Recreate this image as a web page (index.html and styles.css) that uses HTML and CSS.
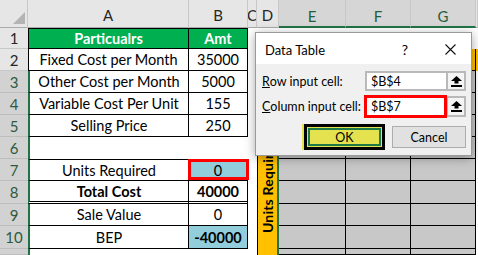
FILE: index.html
```html
<!DOCTYPE html>
<html>
<head>
<meta charset="utf-8">
<link rel="stylesheet" href="styles.css">
</head>
<body>
<div class="sheet">
  <!-- header row -->
  <div class="corner"><svg width="28" height="28" viewBox="0 0 28 28"><polygon points="25,12 25,24 13,24" fill="#b4b4b4"/></svg></div>
  <div class="ch">A</div>
  <div class="ch">B</div>
  <div class="ch">C</div>
  <div class="ch">D</div>
  <div class="ch sel">E</div>
  <div class="ch sel">F</div>
  <div class="ch sel">G</div>
  <div class="ch"></div>

  <!-- row 1 -->
  <div class="rh">1</div>
  <div class="c bt bl br bb head">Particualrs</div>
  <div class="c bt br bb head">Amt</div>
  <div class="c"></div><div class="c"></div><div class="c"></div><div class="c"></div><div class="c"></div><div class="c"></div>

  <!-- row 2 -->
  <div class="rh">2</div>
  <div class="c bl br bb">Fixed Cost per Month</div>
  <div class="c br bb">35000</div>
  <div class="c"></div><div class="c"></div>
  <div class="c ylw br bb"></div><div class="c ylw br bb"></div><div class="c ylw br bb"></div><div class="c ylw"></div>

  <!-- row 3 -->
  <div class="rh sel">3</div>
  <div class="c gl br bb">Other Cost per Month</div>
  <div class="c br bb">5000</div>
  <div class="c"></div>
  <div class="dcol"><span>Units Required</span></div>
  <div class="c gry"></div><div class="c gry"></div><div class="c gry"></div><div class="c"></div>

  <!-- row 4 -->
  <div class="rh sel">4</div>
  <div class="c gl br bb">Variable Cost Per Unit</div>
  <div class="c br bb">155</div>
  <div class="c"></div>
  <div class="c gry"></div><div class="c gry"></div><div class="c gry"></div><div class="c"></div>

  <!-- row 5 -->
  <div class="rh sel">5</div>
  <div class="c gl br bb">Selling Price</div>
  <div class="c br bb">250</div>
  <div class="c"></div>
  <div class="c gry"></div><div class="c gry"></div><div class="c gry"></div><div class="c"></div>

  <!-- row 6 -->
  <div class="rh sel">6</div>
  <div class="c gl"></div>
  <div class="c"></div>
  <div class="c"></div>
  <div class="c gry"></div><div class="c gry"></div><div class="c gry"></div><div class="c"></div>

  <!-- row 7 -->
  <div class="rh sel">7</div>
  <div class="c gl bt br bb">Units Required</div>
  <div class="c bt br bb blue red">0</div>
  <div class="c"></div>
  <div class="c gry"></div><div class="c gry"></div><div class="c gry"></div><div class="c"></div>

  <!-- row 8 -->
  <div class="rh sel">8</div>
  <div class="c gl br dbl bold">Total Cost</div>
  <div class="c br dbl bold">40000</div>
  <div class="c"></div>
  <div class="c gry"></div><div class="c gry"></div><div class="c gry"></div><div class="c"></div>

  <!-- row 9 -->
  <div class="rh sel">9</div>
  <div class="c gl br bb">Sale Value</div>
  <div class="c br bb">0</div>
  <div class="c"></div>
  <div class="c gry"></div><div class="c gry"></div><div class="c gry"></div><div class="c"></div>

  <!-- row 10 -->
  <div class="rh sel">10</div>
  <div class="c gl br bb">BEP</div>
  <div class="c br bb blue bold">-40000</div>
  <div class="c"></div>
  <div class="c gry"></div><div class="c gry"></div><div class="c gry"></div><div class="c"></div>

  <!-- row 11 -->
  <div class="rh sel"></div>
  <div class="c gl"></div>
  <div class="c"></div>
  <div class="c"></div>
  <div class="c gry"></div><div class="c gry"></div><div class="c gry"></div><div class="c"></div>
</div>

<div class="dlg">
  <div class="dlg-title">
    <span class="dlg-name">Data Table</span>
    <span class="dlg-help">?</span>
    <svg class="dlg-close" width="11" height="11" viewBox="0 0 11 11"><path d="M0.5 0.5 L10.5 10.5 M10.5 0.5 L0.5 10.5" stroke="#111" stroke-width="1.1" fill="none"/></svg>
  </div>
  <div class="dlg-body">
    <div class="field">
      <span class="lbl"><u>R</u>ow input cell:</span>
      <div class="inp">$B$4</div>
      <div class="pick"><svg width="11" height="11" viewBox="0 0 11 11"><polygon points="5.5,0 11,5 0,5" fill="#000"/><rect x="3.5" y="5" width="4" height="2.5" fill="#000"/><rect x="0" y="9" width="11" height="2" fill="#000"/></svg></div>
    </div>
    <div class="field">
      <span class="lbl"><u>C</u>olumn input cell:</span>
      <div class="inp hot">$B$7</div>
      <div class="pick"><svg width="11" height="11" viewBox="0 0 11 11"><polygon points="5.5,0 11,5 0,5" fill="#000"/><rect x="3.5" y="5" width="4" height="2.5" fill="#000"/><rect x="0" y="9" width="11" height="2" fill="#000"/></svg></div>
    </div>
    <div class="btns">
      <div class="btn ok">OK</div>
      <div class="btn cancel">Cancel</div>
    </div>
  </div>
</div>
</body>
</html>
```
FILE: styles.css
```css
html, body {
  margin: 0;
  padding: 0;
}
body {
  width: 478px;
  height: 255px;
  overflow: hidden;
  position: relative;
  background: #fff;
  font-family: Lato, "Liberation Sans", sans-serif;
  color: #000;
}
.sheet {
  display: grid;
  grid-template-columns: 28px 161px 59px 9px 22px 67px 65px 65px 1fr;
  grid-template-rows: 28px 21px 22px 22px 22px 22px 22px 22px 23px 22px 23px 1fr;
  height: 255px;
  overflow: hidden;
}
.sheet > div {
  box-sizing: border-box;
  min-width: 0;
  overflow: hidden;
}
.corner {
  background: #e6e6e6;
  border-right: 1px solid #c8c8c8;
  border-bottom: 1px solid #ababab;
}
.corner svg { display: block; }
.ch {
  background: #e6e6e6;
  border-right: 1px solid #c8c8c8;
  border-bottom: 1px solid #ababab;
  display: flex;
  align-items: center;
  justify-content: center;
  padding-top: 3px;
  font-size: 15px;
  color: #262626;
}
.ch.sel {
  background: #d6d6d6;
  border-bottom: 2px solid #217346;
  color: #1e5f3b;
  padding-top: 5px;
}
.rh {
  background: #e6e6e6;
  border-bottom: 1px solid #c8c8c8;
  display: flex;
  align-items: center;
  justify-content: center;
  font-size: 15px;
  color: #262626;
}
.rh.sel {
  background: #d2d2d2;
  border-bottom-color: #bdbdbd;
  color: #2b5a40;
}
.c {
  display: flex;
  align-items: center;
  justify-content: center;
  font-size: 14.5px;
  white-space: nowrap;
}
.bt { border-top: 1px solid #000; }
.bl { border-left: 1px solid #000; }
.br { border-right: 1px solid #000; }
.bb { border-bottom: 1px solid #000; }
.gl { border-left: 2px solid #217346; }
.dbl { border-bottom: 3px double #000; }
.bold { font-weight: bold; }
.head {
  background: #00b050;
  color: #fff;
  font-weight: bold;
}
.blue { background: #92cddc; }
.red { position: relative; overflow: visible !important; }
.red::after {
  content: "";
  position: absolute;
  left: -1px;
  right: -2px;
  top: -1px;
  bottom: 0;
  border: 3px solid #ff0000;
}
.ylw { background: #ffc000; }
.gry {
  background: #c8c8c8;
  border-right: 1px solid #000;
  border-bottom: 1px solid #000;
}
.dcol {
  grid-column: 5;
  grid-row: 4 / span 9;
  background: #ffc000;
  border-right: 2px solid #217346;
  border-left: 1px solid #000;
  display: flex;
  flex-direction: column;
  align-items: center;
  justify-content: flex-end;
  padding-bottom: 22px;
}
.dcol span {
  writing-mode: vertical-rl;
  transform: rotate(180deg);
  font-weight: bold;
  font-size: 14px;
  white-space: nowrap;
  letter-spacing: 0.2px;
}

/* dialog */
.dlg {
  position: absolute;
  left: 255px;
  top: 32px;
  width: 217px;
  height: 124px;
  box-sizing: border-box;
  border: 1px solid #9a9a9a;
  background: #f0f0f0;
  box-shadow: 0 2px 10px rgba(0, 0, 0, 0.35);
  display: flex;
  flex-direction: column;
  font-family: Lato, "Liberation Sans", sans-serif;
  font-size: 12.5px;
  color: #000;
}
.dlg-title {
  height: 31px;
  flex: none;
  background: #fff;
  display: flex;
  align-items: center;
  padding: 2px 0 0 9px;
  box-sizing: border-box;
}
.dlg-name { font-size: 13px; }
.dlg-help {
  margin-left: auto;
  font-size: 14px;
  margin-right: 37px;
}
.dlg-close { margin-right: 15px; }
.dlg-body {
  padding: 7px 5px 0 6px;
  display: flex;
  flex-direction: column;
  gap: 5px;
}
.field {
  display: flex;
  height: 20px;
  align-items: stretch;
}
.field + .field { height: 21px; }
.lbl {
  width: 103px;
  flex: none;
  display: flex;
  align-items: center;
  white-space: nowrap;
  font-size: 12.5px;
}
.inp {
  width: 81px;
  box-sizing: border-box;
  border: 2px solid #b9b9b9;
  border-right: none;
  background: #fff;
  display: flex;
  align-items: center;
  padding-left: 4px;
  font-size: 12.5px;
}
.inp.hot {
  border: 2px solid #ff0000;
  box-shadow: 0 0 0 1px #ff0000;
  position: relative;
}
.pick {
  width: 20px;
  box-sizing: border-box;
  border: 2px solid #b9b9b9;
  background: #f4f4f4;
  display: flex;
  align-items: center;
  justify-content: center;
}
.btns {
  display: flex;
  justify-content: flex-end;
  align-items: center;
  gap: 7px;
  margin-top: 2px;
  height: 26px;
}
.btn {
  box-sizing: border-box;
  display: flex;
  align-items: center;
  justify-content: center;
  font-size: 12.5px;
}
.ok {
  width: 81px;
  height: 26px;
  background: #e4e24f;
  border: 3px solid #000;
  box-shadow: inset 0 0 0 1px #e4e24f, inset 0 0 0 3px #1d7a46, -2px 0 0 #e4e24f;
}
.cancel {
  width: 74px;
  height: 22px;
  background: #e1e1e1;
  border: 1px solid #adadad;
}
```
